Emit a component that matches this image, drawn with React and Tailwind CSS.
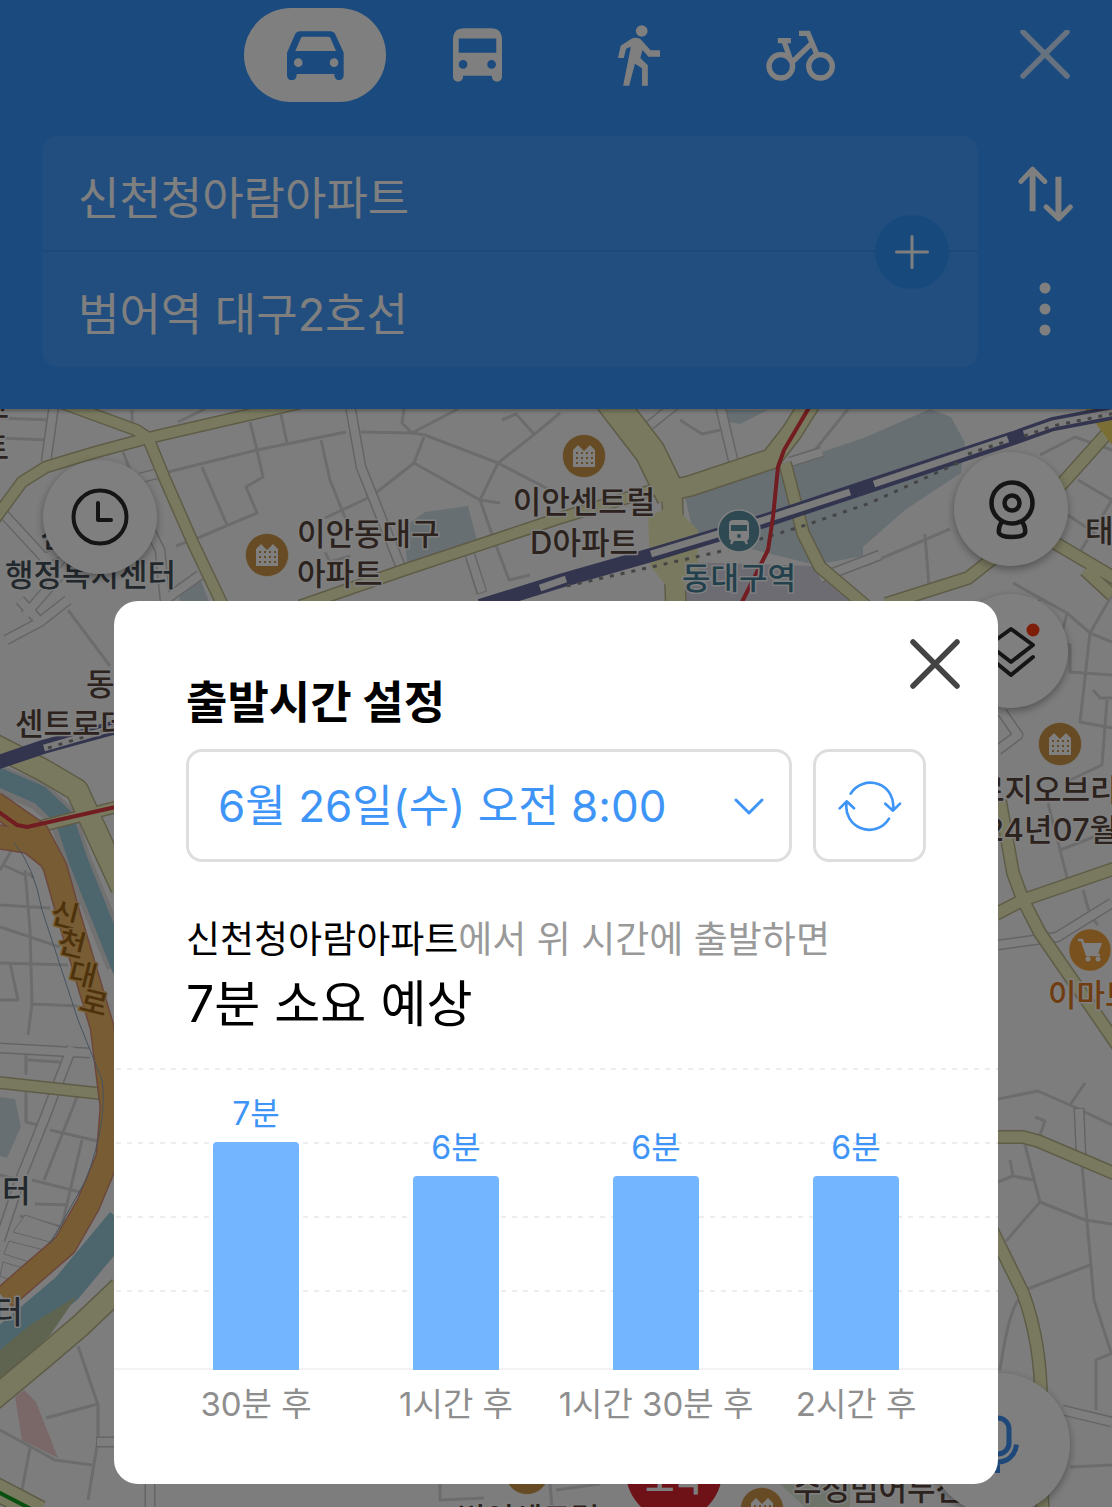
import { useState } from 'react'

const FORECAST = [
  { label: '30분 후', minutes: 7, height: 228 },
  { label: '1시간 후', minutes: 6, height: 194 },
  { label: '1시간 30분 후', minutes: 6, height: 194 },
  { label: '2시간 후', minutes: 6, height: 194 },
]

/* ---------- Icons ---------- */

function CarIcon() {
  return (
    <svg width="57" height="49" viewBox="165 90 172 147" fill="currentColor" aria-hidden="true">
      <path
        fillRule="evenodd"
        d="M190 98Q194 90 203 90H297Q306 90 310 98L336 155V224A14 14 0 0 1 308 224V219H194V224A14 14 0 0 1 165 224V155ZM212 107Q209 107 207 111L190 150H313L296 111Q294 107 290 107ZM186 185a13 13 0 1 0 26 0a13 13 0 1 0-26 0M294 185a13 13 0 1 0 26 0a13 13 0 1 0-26 0"
      />
    </svg>
  )
}

function BusIcon() {
  return (
    <svg width="49" height="54" viewBox="666 86 146 160" fill="currentColor" aria-hidden="true">
      <path
        fillRule="evenodd"
        d="M666 120Q666 86 700 86H778Q812 86 812 120V231A15 15 0 0 1 782 231V228H696V231A15 15 0 0 1 666 231ZM683 117V159H795V117ZM683 194a13 13 0 1 0 26 0a13 13 0 1 0-26 0M768 194a13 13 0 1 0 26 0a13 13 0 1 0-26 0"
      />
    </svg>
  )
}

function WalkIcon() {
  return (
    <svg width="42" height="61" viewBox="115 73 124 183" preserveAspectRatio="none" fill="currentColor" aria-hidden="true">
      <circle cx="185" cy="91" r="17.5" />
      <path d="M123 135L157 113Q168 109 180 114L189 124L211 149H239V168H205L187 148L181 172L203 194V255H186V203L165 189L148 255H130L153 138L139 144L132 172H115Z" />
    </svg>
  )
}

function BikeIcon() {
  return (
    <svg width="70" height="51" viewBox="549 89 208 153" preserveAspectRatio="none" fill="none" stroke="currentColor" strokeWidth="16" aria-hidden="true">
      <circle cx="593" cy="198" r="35" />
      <circle cx="711" cy="198" r="35" />
      <path d="M584 121H623M603 124L621 176M626 186L690 124M647 99H674L702 166" />
    </svg>
  )
}

function CloseIcon({ thick }) {
  return (
    <svg width="50" height="50" viewBox="0 0 50 50" fill="none" stroke="currentColor" strokeWidth="5.5" strokeLinecap="round" aria-hidden="true">
      <path d={thick ? 'M3 3L47 47M47 3L3 47' : 'M3 2L47 46M47 2L3 46'} />
    </svg>
  )
}

function SwapIcon() {
  return (
    <svg width="55" height="56" viewBox="712 134 166 168" fill="none" stroke="currentColor" strokeLinejoin="round" aria-hidden="true">
      <path strokeWidth="18" d="M756 146V270M834 166V290" />
      <path strokeWidth="15" strokeLinecap="round" d="M721 180L756 143L793 180M797 257L835 293L870 257" />
    </svg>
  )
}

function MoreIcon() {
  return (
    <svg width="12" height="54" viewBox="0 0 12 54" fill="currentColor" aria-hidden="true">
      <circle cx="6" cy="6" r="5.5" />
      <circle cx="6" cy="27" r="5.5" />
      <circle cx="6" cy="48" r="5.5" />
    </svg>
  )
}

function PlusIcon() {
  return (
    <svg width="34" height="34" viewBox="0 0 34 34" stroke="currentColor" strokeWidth="3" strokeLinecap="round" aria-hidden="true">
      <path d="M17 1.5V32.5M1.5 17H32.5" />
    </svg>
  )
}

function ClockIcon() {
  return (
    <svg width="60" height="60" viewBox="0 0 60 60" fill="none" stroke="currentColor" strokeWidth="4" strokeLinecap="round" strokeLinejoin="round" aria-hidden="true">
      <circle cx="30" cy="30" r="26.5" />
      <path d="M28 16V33H41" />
    </svg>
  )
}

function RoadviewIcon() {
  return (
    <svg width="60" height="64" viewBox="0 0 60 64" fill="none" stroke="currentColor" strokeWidth="4.5" strokeLinejoin="round" aria-hidden="true">
      <circle cx="31" cy="26" r="20.5" />
      <circle cx="31" cy="26" r="7.5" />
      <path d="M20.5 45Q17 51 18 56Q20 60 31 60T44 56Q45 51 41.5 45" />
    </svg>
  )
}

function LayersIcon() {
  return (
    <svg width="60" height="60" viewBox="0 0 60 60" fill="none" stroke="currentColor" strokeWidth="4" strokeLinecap="round" strokeLinejoin="round" aria-hidden="true">
      <path d="M30 8L52 24L30 41L8 24Z" />
      <path d="M8 36L30 54L52 36" />
      <circle cx="52" cy="9" r="6.5" fill="#ff3c10" stroke="none" />
    </svg>
  )
}

function MicIcon() {
  return (
    <svg width="50" height="62" viewBox="0 0 50 62" fill="none" stroke="currentColor" strokeWidth="5" aria-hidden="true">
      <rect x="12" y="5" width="23" height="36" rx="11" />
      <path d="M4.5 31.5C6 43 14 49 23.500 49S41 43 42.500 31.5M23.500 49V60" />
    </svg>
  )
}

function RefreshIcon() {
  return (
    <svg width="64" height="52" viewBox="415 508 186 156" fill="none" stroke="currentColor" strokeWidth="8" strokeLinecap="round" strokeLinejoin="round" aria-hidden="true">
      <path d="M450 549A69 69 0 0 1 577 596M554 579L577 600L598 579" />
      <path d="M565 624A69 69 0 0 1 438 576M417 593L438 572L460 593" />
    </svg>
  )
}

function ChevronIcon() {
  return (
    <svg width="30" height="18" viewBox="0 0 30 18" fill="none" stroke="currentColor" strokeWidth="3" strokeLinecap="round" strokeLinejoin="round" aria-hidden="true">
      <path d="M2 3L15 16L28 3" />
    </svg>
  )
}

/* ---------- Map ---------- */

function BuildingPin({ x, y }) {
  return (
    <g transform={`translate(${x} ${y})`}>
      <circle r="21.5" fill="#cd9648" stroke="#fff" strokeOpacity=".5" />
      <path d="M-11 -6L-6 -11L0 -5L6 -11L11 -6V11H-11Z" fill="#fff" />
      <path d="M-8 -3H9M-8 2H9M-8 7H9" stroke="#cd9648" strokeWidth="2" strokeDasharray="2 3" />
    </g>
  )
}

function MapCanvas() {
  return (
    <svg className="absolute inset-0 h-full w-full" viewBox="0 409 1112 1098" preserveAspectRatio="xMidYMin slice" fill="none" aria-label="지도">
      <rect y="409" width="1112" height="1098" fill="#fbfbfb" />

      {/* areas */}
      <g fill="#cfdfe7">
        <path d="M468 506L477 540L407 563L404 527L425 512Z" />
        <path d="M178 583L200 578L210 604H180Z" />
        <path d="M724 410H768L740 424L728 422Z" />
        <path d="M685 497L828 450L866 437L930 409L951 417L965 443L961 473L905 510L863 547V556L815 565L694 535Z" />
        <path d="M0 1097L15 1099L21 1127L7 1158L0 1156Z" />
      </g>
      <path d="M686 562L815 566L860 604H684Z" fill="#dbd9e4" />
      <path d="M15 1397L24 1390L36 1402L58 1458L22 1440Z" fill="#f5cfd0" />
      <path d="M780 1484H850V1507H805Z" fill="#dfe9d6" />

      {/* lanes */}
      <g stroke="#d8d8d8" strokeWidth="3" strokeLinejoin="round">
        <path d="M168 472L257 450L346 432M250 422L257 450L263 477L246 487L257 513L200 537L176 546M202 467L227 525M280 410L287 443M321 440L330 480L350 530" />
        <path d="M0 418L50 420M0 438L50 440M132 410V430M178 422L205 409M123 452L130 470M361 432L412 433L425 435L498 463L550 490M424 437L414 463L480 500L500 503M414 463L377 492L366 496M480 500L498 463L536 433L560 413M480 500L493 537L509 580L530 575M404 409L402 423L412 433L458 409M502 420L516 414L534 434" />
        <path d="M370 497L325 518M325 552L330 562L350 556M680 420L702 434L720 430M848 409L815 450M925 534L929 587M866 565L950 529M1078 480L1112 500M1068 515L1112 545M1040 455L1075 437L1112 450M1075 560L1112 500" />
        <path d="M1013 583L1067 613L1090 633L1112 642M1090 633L1080 722L1112 728M1090 633L1112 595M1067 613L1060 642L1070 645V672L1112 675M1093 690L1100 698H1112M1107 700L1102 765L1070 780M1048 803L1069 885M1060 850L1112 830M1083 890L1090 915L1098 925M1040 600L1028 612" />
        <path d="M998 1099L1038 1091L1070 1105L1112 1125M1070 1105L1085 1083M1035 1117L1045 1121L1040 1135M1025 1145L1040 1202L1006 1241M1040 1202L1085 1220L1112 1224M1082 1165L1094 1300L1112 1355M1025 1290L1090 1265M1018 1300Q1008 1315 1000 1370M998 1182L1013 1176L1033 1180M1010 1160L1013 1176M1096 1410V1360L1112 1353M1070 1467L1112 1465" />
        <path d="M0 905L50 908M0 927L60 947M0 963L68 965M10 963L18 1000L0 1000M32 1004L28 1035M25 870L30 930L32 1004L78 1006M0 870L14 846M28 873L34 878M3 865L25 875" />
        <path d="M26 1047V1075M28 1060L60 1062M26 1090V1122L38 1125M50 1130L102 1142M77 1097L44 1180M82 1140L62 1225M32 1180L80 1192M35 1204L68 1205M20 1216L62 1227M0 1175L20 1180M78 1346L98 1405V1440L88 1500M46 1418L98 1404M0 1430L55 1460L92 1465M30 1448L22 1490M68 610L110 666" />
        <path d="M440 1484V1500L484 1498M550 1484L552 1507M556 1490L600 1484" />
      </g>
      <g stroke="#c9c9c9" strokeWidth="11" strokeLinejoin="round">
        <path d="M54 405L46 462M350 405L361 467L404 575M720 405L734 464M470 555L482 593M0 510L60 575L25 615M60 575L90 540L40 560M72 1047L44 1120L20 1180L0 1240M0 1048L90 1053M6 640L40 622L68 600M40 622L20 600M650 425L675 405M790 462L822 452M1002 712L1018 735L998 750M998 945L1057 937L1112 903M1079 1108L1081 1155M1062 1410L1112 1422M96 1442H120M150 1484V1507M820 578L880 555M140 478L164 472M140 510L160 550L165 600L200 575" />
      </g>
      <g stroke="#fdfdfd" strokeWidth="8" strokeLinejoin="round">
        <path d="M54 405L46 462M350 405L361 467L404 575M720 405L734 464M470 555L482 592M0 510L60 575L25 615M60 575L90 540L40 560M72 1047L44 1120L20 1180L0 1240M0 1048L90 1053M6 640L40 622L68 600M40 622L20 600M650 425L675 405M790 462L822 452M1002 712L1018 735L998 750M998 945L1057 937L1112 903M1079 1109L1081 1155M1062 1410L1112 1422M97 1442H120M150 1484V1507M820 578L880 555M140 478L164 472M140 510L160 550L165 600L200 575" />
      </g>
      <g fill="#fbfbfb" stroke="#c9c9c9">
        <path d="M25 1215L60 1227L50 1242L13 1232Z M9 1241L44 1250L29 1262L4 1254Z M3 1262L23 1268L10 1280L0 1276Z" />
      </g>

      {/* river */}
      <path d="M-4 778L40 797L63 818L77 860L120 965" stroke="#e2e2e2" strokeWidth="28" />
      <path d="M-4 776L40 795L64 818L78 860L122 970" stroke="#9bcadb" strokeWidth="19" />
      <path d="M122 1222L67 1288L-6 1350" stroke="#9bcadb" strokeWidth="31" />
      <path d="M77 1296L30 1325L0 1350V1382L50 1335Z" fill="#bcc8a0" />

      {/* main roads */}
      <g stroke="#bcb98e" strokeLinejoin="round">
        <path strokeWidth="13" d="M62 403L136 430L148 438L300 403M148 438L96 452L46 467L22 482L-6 520M148 438L164 477L193 543L224 608" />
        <path strokeWidth="13" d="M300 606L404 570L560 518L660 488" />
        <path strokeWidth="32" d="M610 400L650 452L672 497" />
        <path strokeWidth="22" d="M672 490L690 486L771 459L792 432L812 400M672 490L676 610" />
        <path strokeWidth="14" d="M785 463L803 533L820 567L866 606M1112 428L1060 486M1050 540L1116 579M996 556L968 578L886 604" />
        <path strokeWidth="14" d="M1000 800L1013 873L1023 900L1040 933L1118 1046M996 914L1023 900L1116 868M1112 595L1085 570M990 1137H1023L1038 1141L1118 1175M992 1230L1023 1293Q1042 1345 1041 1407T1043 1512" />
        <path strokeWidth="24" d="M-6 745L43 770L77 790L100 840L122 888" />
        <path strokeWidth="13" d="M30 829L120 806M-6 1082L104 1094" />
        <path strokeWidth="24" d="M120 1288L80 1326L40 1360L-8 1400M-6 1488L40 1512" />
      </g>
      <path d="M648 517L673 505L698 530V570L678 600L650 566Z" fill="#f3f2bf" />
      <g stroke="#f3f2bf" strokeLinejoin="round">
        <path strokeWidth="10" d="M62 403L136 430L148 438L300 403M148 438L96 452L46 467L22 482L-6 520M148 438L164 477L193 543L224 608" />
        <path strokeWidth="10" d="M300 606L404 570L560 518L660 488" />
        <path strokeWidth="29" d="M610 400L650 452L672 497" />
        <path strokeWidth="19" d="M672 490L690 486L771 459L792 432L812 400M672 490L676 610" />
        <path strokeWidth="11" d="M785 463L803 533L820 567L866 606M1112 428L1060 486M1050 540L1116 579M996 556L968 578L886 604" />
        <path strokeWidth="11" d="M1000 800L1013 873L1023 900L1040 933L1118 1046M996 914L1023 900L1116 868M1112 595L1085 570M990 1137H1023L1038 1141L1118 1175M992 1230L1023 1293Q1042 1345 1041 1407T1043 1512" />
        <path strokeWidth="21" d="M-6 745L43 770L77 790L100 840L122 888" />
        <path strokeWidth="10" d="M30 829L120 806M-6 1082L104 1094" />
        <path strokeWidth="21" d="M120 1288L80 1326L40 1360L-8 1400M-6 1488L40 1512" />
      </g>
      <path d="M1085 409H1112V445Z" fill="#f4dd6a" />
      <path d="M-6 1490L33 1510" stroke="#12a020" strokeWidth="4" />

      {/* expressway */}
      <g strokeLinejoin="round">
        <path d="M-6 836L30 842L50 858M-6 803L37 833L55 867L68 913L102 1027L112 1107L108 1157L88 1205L65 1245L4 1298" stroke="#d98f78" strokeWidth="25" />
        <path d="M-6 836L30 842L50 858M-6 803L37 833L55 867L68 913L102 1027L112 1107L108 1157L88 1205L65 1245L4 1298" stroke="#efb968" strokeWidth="22" />
        <path d="M14 843Q34 866 42 910L78 1020L102 1080Q108 1120 86 1180L50 1244" stroke="#8ea5bd" strokeWidth="1" />
      </g>

      {/* railway */}
      <g stroke="#666a9f">
        <path strokeWidth="14" d="M480 606L560 581L651 555L764 521L866 487L1014 438L1053 424L1116 412M-4 763L43 747L120 726" />
        <path stroke="#f6f6f6" strokeWidth="7" d="M651 554L764 520L850 492M874 484L1008 439M1024 434L1053 424L1116 412M44 748L120 726M540 588L566 579" />
        <path stroke="#888" strokeWidth="3" strokeDasharray="4 7" d="M968 454L1010 440M1024 436L1053 426L1116 413M48 748L120 726" />
        <path stroke="#8b8b8b" strokeWidth="3" strokeDasharray="4 7" d="M567 586L718 552L806 525L870 503L958 463" />
      </g>
      <path d="M810 406L784 450L778 467L773 517L768 550L741 604M-4 810L17 825L27 827L120 806" stroke="#e33a42" strokeWidth="4" strokeLinejoin="round" />

      {/* pins */}
      <BuildingPin x={267} y={555} />
      <BuildingPin x={584} y={456} />
      <BuildingPin x={1060} y={744} />
      <BuildingPin x={527} y={1473} />
      <BuildingPin x={762} y={1509} />
      <g transform="translate(739 531)">
        <circle r="21" fill="#5d93a5" stroke="#fff" strokeWidth="1.5" />
        <rect x="-10" y="-11" width="20" height="21" rx="4" fill="#fff" />
        <path d="M-8 -6H8V0H-8Z" fill="#5d93a5" />
        <circle cy="5" r="2" fill="#5d93a5" />
        <path d="M-6 9L-8 13M6 9L8 13" stroke="#fff" strokeWidth="2.5" />
      </g>
      <g transform="translate(1090 950)">
        <circle r="21" fill="#f2a23c" stroke="#fff" strokeOpacity=".5" />
        <path d="M-12 -10H-8L-3 5H10" stroke="#fff" strokeWidth="2.5" />
        <path d="M-8 -7H12L8 4H-4Z" fill="#fff" />
        <circle cx="-2" cy="9" r="2.5" fill="#fff" />
        <circle cx="8" cy="9" r="2.5" fill="#fff" />
      </g>
      <circle cx="674" cy="1472" r="48" fill="#dc2430" />

      {/* place names */}
      <g fontSize="31" fontWeight="500" stroke="#fff" strokeWidth="3" strokeLinejoin="round" paintOrder="stroke">
        <g fill="#59453d">
          <text x="297" y="545">이안동대구</text>
          <text x="297" y="585">아파트</text>
          <text x="584" y="513" textAnchor="middle">이안센트럴</text>
          <text x="584" y="554" textAnchor="middle">D아파트</text>
          <text x="9" y="418" textAnchor="end">교</text>
          <text x="9" y="459" textAnchor="end">트</text>
          <text x="1085" y="542">태</text>
          <text x="86" y="695">동대구</text>
          <text x="15" y="735">센트로데시앙</text>
          <text x="976" y="801">르지오브리센트</text>
          <text x="985" y="841">24년07월</text>
          <text x="793" y="1500">수성범어두산</text>
          <text x="457" y="1530">범어센트럴</text>
        </g>
        <g fill="#46505a">
          <text x="40" y="547">신</text>
          <text x="5" y="586">행정복지센터</text>
          <text x="2" y="1202">터</text>
          <text x="-6" y="1323">터</text>
        </g>
        <text x="682" y="589" fill="#45829a">동대구역</text>
        <text x="1048" y="1006" fill="#df7a22">이마트</text>
        <text x="49 56 67 78" y="922 951 982 1010" rotate="14" fontSize="30" fill="#9a6518" stroke="#efb968">신천대로</text>
        <text x="674" y="1491" textAnchor="middle" fill="#fff" stroke="none" fontWeight="700">오락</text>
      </g>
    </svg>
  )
}

function MapButton({ label, className = '', children }) {
  return (
    <button
      aria-label={label}
      className={`flex size-[114px] items-center justify-center rounded-full bg-white text-[#2b2b2b] shadow-[0_3px_8px_rgba(0,0,0,0.35)] ${className}`}
    >
      {children}
    </button>
  )
}

/* ---------- Route search ---------- */

const MODES = [
  { id: 'car', name: '자동차', Icon: CarIcon },
  { id: 'bus', name: '대중교통', Icon: BusIcon },
  { id: 'walk', name: '도보', Icon: WalkIcon },
  { id: 'bike', name: '자전거', Icon: BikeIcon },
]

function RouteHeader() {
  const [mode, setMode] = useState('car')
  return (
    <header className="relative z-10 bg-[#3495fc] pt-2 pb-[42px] pl-[42px] pr-[34px] text-white shadow-[0_2px_4px_rgba(0,0,0,0.3)]">
      <div className="-ml-1 grid grid-cols-[1fr_auto_1fr] items-center">
        <nav className="col-start-2 flex gap-5">
          {MODES.map(({ id, name, Icon }) => (
            <button
              key={id}
              aria-label={name}
              onClick={() => setMode(id)}
              className={`flex h-[94px] w-[142px] items-center justify-center rounded-full ${mode === id ? 'bg-white text-[#3495fc]' : ''}`}
            >
              <Icon />
            </button>
          ))}
        </nav>
        <button aria-label="닫기" className="flex size-[66px] items-center justify-center justify-self-end opacity-75">
          <CloseIcon />
        </button>
      </div>

      <div className="mt-[34px] flex gap-[34px]">
        <div className="relative min-w-0 flex-1 rounded-2xl bg-white/8 text-[45px]">
          <input aria-label="출발지" defaultValue="신천청아람아파트" className="block h-[116px] w-full border-b-2 border-[#3991f6] bg-transparent px-9 pt-1 outline-none" />
          <input aria-label="도착지" defaultValue="범어역 대구2호선" className="block h-[115px] w-full bg-transparent px-9 pt-1 outline-none" />
          <button aria-label="경유지 추가" className="absolute top-1/2 right-[29px] flex size-[74px] -translate-y-1/2 items-center justify-center rounded-full bg-[#2f92f8]">
            <PlusIcon />
          </button>
        </div>
        <div className="flex w-[66px] flex-col">
          <button aria-label="출발지 도착지 바꾸기" className="flex flex-1 items-center justify-center"><SwapIcon /></button>
          <button aria-label="더보기" className="flex flex-1 items-center justify-center"><MoreIcon /></button>
        </div>
      </div>
    </header>
  )
}

/* ---------- Departure time dialog ---------- */

function ForecastChart() {
  return (
    <div className="mt-[28px]">
      <div className="grid">
        <div className="col-start-1 row-start-1 flex flex-col border-b-2 border-[#f3f3f3]">
          {[0, 1, 2, 3].map(i => (
            <div key={i} className={i === 3 ? 'flex-1' : 'h-[74px]'}>
              <div className="h-[2px] bg-[repeating-linear-gradient(90deg,transparent_0_2px,#ededed_2px_7px,transparent_7px_11px)]" />
            </div>
          ))}
        </div>
        <ul className="col-start-1 row-start-1 grid h-[302px] grid-cols-4 items-end px-[42px]">
          {FORECAST.map(f => (
            <li key={f.label} className="flex flex-col items-center">
              <span className="text-[32px] leading-[56px] text-[#3e95f7]">{f.minutes}분</span>
              <div className="w-[86px] rounded-t bg-[#74b5ff]" style={{ height: f.height }} />
            </li>
          ))}
        </ul>
      </div>
      <ul className="mt-[10px] grid grid-cols-4 px-[42px] text-center text-[33px] leading-[48px] text-[#8e8e8e]">
        {FORECAST.map(f => <li key={f.label} className="whitespace-nowrap">{f.label}</li>)}
      </ul>
    </div>
  )
}

function DepartureDialog() {
  return (
    <div className="absolute inset-0 z-20 flex items-end bg-black/50 px-[114px] pb-[23px]">
      <section role="dialog" aria-labelledby="departure-title" className="w-full rounded-3xl bg-white pt-[29px] pb-14 text-black">
        <div className="flex items-start justify-between pl-[72px] pr-[29px]">
          <h1 id="departure-title" className="mt-[43px] text-[45px] leading-[60px] font-bold">출발시간 설정</h1>
          <button aria-label="닫기" className="flex size-[68px] items-center justify-center text-[#444]">
            <CloseIcon thick />
          </button>
        </div>

        <div className="mt-[16px] flex gap-[21px] px-[72px] text-[#3e95f7]">
          <div className="relative min-w-0 flex-1">
            <select aria-label="출발 시간" className="h-[113px] w-full appearance-none rounded-2xl border-3 border-[#dedede] bg-white pr-[70px] pl-[29px] text-[44px] outline-none">
              <option>6월 26일(수) 오전 8:00</option>
            </select>
            <span className="pointer-events-none absolute inset-y-0 right-[28px] flex items-center">
              <ChevronIcon />
            </span>
          </div>
          <button aria-label="새로고침" className="flex size-[113px] items-center justify-center rounded-2xl border-3 border-[#dedede]">
            <RefreshIcon />
          </button>
        </div>

        <div className="mt-[50px] px-[72px]">
          <p className="text-[37px] leading-[56px] text-[#999]">
            <span className="text-black">신천청아람아파트</span>에서 위 시간에 출발하면
          </p>
          <p className="text-[50px] leading-[72px]">7분 소요 예상</p>
        </div>

        <ForecastChart />
      </section>
    </div>
  )
}

export default function App() {
  return (
    <div className="relative flex min-h-screen flex-col font-['Inter','Noto_Sans_CJK_KR',sans-serif]">
      <RouteHeader />
      <main className="relative flex-1 overflow-hidden">
        <MapCanvas />
        <MapButton label="출발 시간" className="absolute top-[51px] left-[43px]"><ClockIcon /></MapButton>
        <div className="absolute top-[43px] right-[44px] flex flex-col gap-7">
          <MapButton label="로드뷰"><RoadviewIcon /></MapButton>
          <MapButton label="지도 레이어"><LayersIcon /></MapButton>
        </div>
        <button aria-label="음성 검색" className="absolute right-[42px] -bottom-2 flex size-[142px] items-center justify-center rounded-full bg-white text-[#3c90f4] shadow-[0_3px_8px_rgba(0,0,0,0.35)]">
          <MicIcon />
        </button>
      </main>
      <DepartureDialog />
    </div>
  )
}
